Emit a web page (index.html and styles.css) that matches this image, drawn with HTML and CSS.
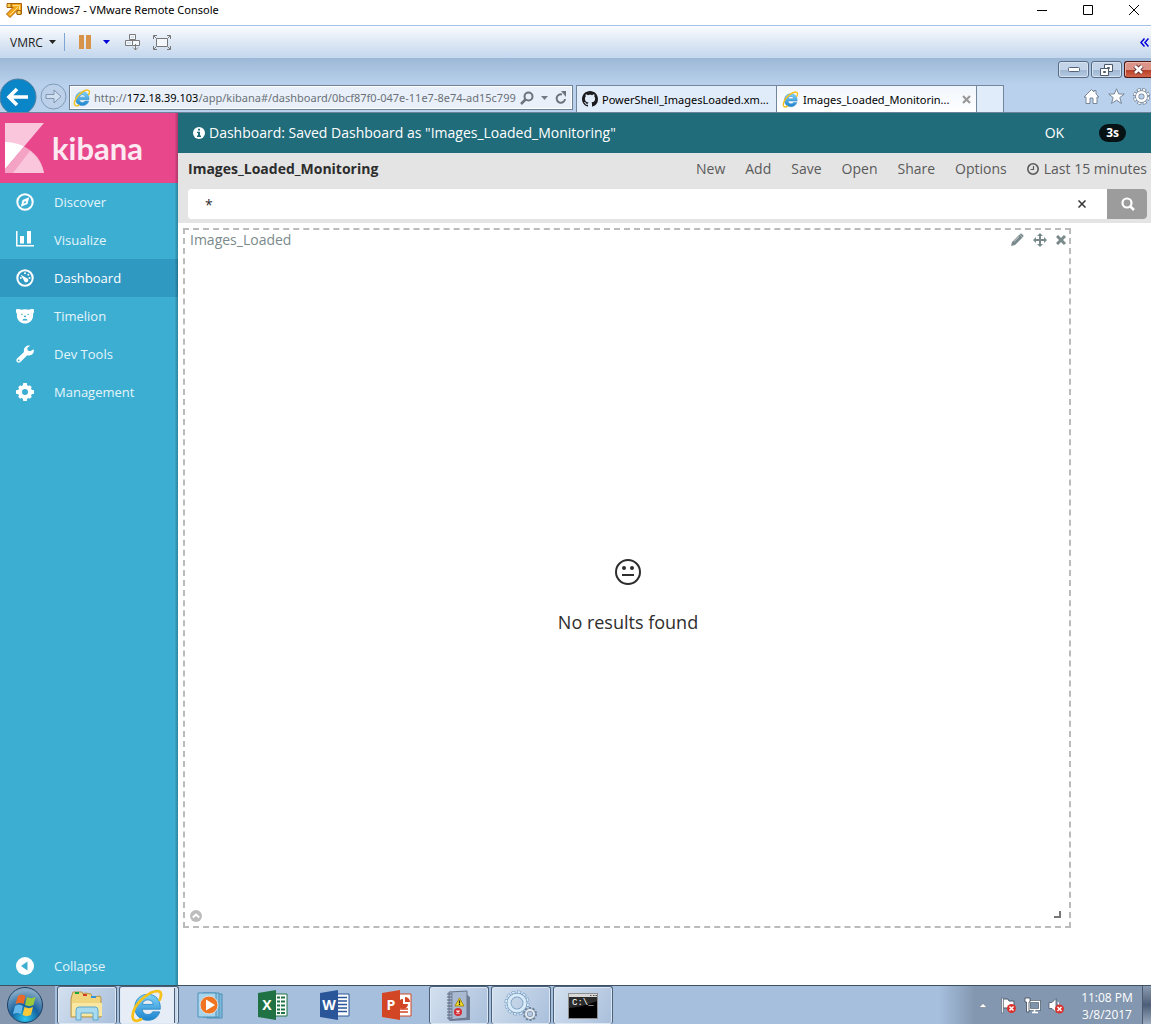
FILE: index.html
```html
<!DOCTYPE html>
<html lang="en">
<head>
    <meta charset="UTF-8">
    <meta name="viewport" content="width=device-width, initial-scale=1.0">
    <title>Windows7 - VMware Remote Console</title>
    <link rel="stylesheet" href="styles.css">
</head>
<body>
    <svg class="defs" aria-hidden="true">
        <defs>
            <linearGradient id="ieBlue" x1="0" y1="0" x2="0" y2="1">
                <stop offset="0" stop-color="#7fd4f8"/>
                <stop offset="1" stop-color="#1c83cf"/>
            </linearGradient>
            <symbol id="ie" viewBox="0 0 32 32">
                <path d="M28.500 19H11.500c.2 3 2.300 5 5.300 5 2.200 0 3.700-.9 4.500-2.500h6.700C26.500 26.500 22.300 29.500 16.800 29.500 9.500 29.500 4.500 24.500 4.500 17.300S9.700 5 16.800 5C24.300 5 29 10.500 28.500 19zM11.600 14.500h10.300c-.3-2.700-2.300-4.300-5.100-4.300s-4.700 1.600-5.200 4.300z" fill="url(#ieBlue)" stroke="#2a86c4" stroke-width=".8"/>
                <path d="M28 10c2-4.500 1.500-7.500-1.500-8C20 1 7 11 3.500 20.500 1.500 26 2.500 30 6 30c1.300 0 2.800-.5 4.500-1.500" fill="none" stroke="#f7c11c" stroke-width="2.600" stroke-linecap="round"/>
            </symbol>
        </defs>
    </svg>

    <header class="titlebar">
        <svg width="16" height="16" viewBox="0 0 16 16">
            <path d="M5 1.500h10.500V12H11V8.500L4 15.500.5 12 7 5.500H5z" fill="#f5a81c" stroke="#a8620c"/>
            <path d="M1 1.500h4v4H1zM11 8.500h4v4h-4z" fill="#fbd04e" stroke="#a8620c"/>
            <path d="M7 3.500h6.500V8M12 5l-8 8" fill="none" stroke="#fde08a"/>
        </svg>
        <h1>Windows7 - VMware Remote Console</h1>
        <div class="window-buttons">
            <button aria-label="Minimize"><svg width="12" height="12"><path d="M1 6.500h10" stroke="#000"/></svg></button>
            <button aria-label="Maximize"><svg width="12" height="12"><path d="M1.500 1.500h9v9h-9z" stroke="#000" fill="none"/></svg></button>
            <button aria-label="Close"><svg width="12" height="12"><path d="M1 1l10 10M11 1L1 11" stroke="#000"/></svg></button>
        </div>
    </header>

    <div class="toolbar">
        <button class="vmrc">VMRC <svg width="7" height="4"><path d="M0 0h7L3.500 4z" fill="#222"/></svg></button>
        <span class="divider"></span>
        <button class="pause" aria-label="Pause"><svg width="14" height="14"><path d="M1 0h5v14H1zM8 0h5v14H8z" fill="#d79448"/></svg></button>
        <button class="more" aria-label="Power options"><svg width="7" height="4"><path d="M0 0h7L3.500 4z" fill="#0000d8"/></svg></button>
        <button class="keys" aria-label="Send Ctrl+Alt+Del">
            <svg width="18" height="18" fill="#f4f8fc" stroke="#7a7a7a"><path d="M5.500 1.500h6v5h-6zM1.500 7.500h7v5h-7zM8.500 7.500h7v5h-7zM11.500 11v6M9 14.500l2.500 2.500 2.500-2.500"/><path d="M7 4h3M3 10h4" stroke="#b9cce2"/></svg>
        </button>
        <button aria-label="Full screen">
            <svg width="20" height="16" fill="none" stroke="#777"><path d="M4.500 4.500h11v8h-11z" fill="#f4f8fc"/><path d="M1.500 5V1.500H5M15 1.500h3.500V5M18.500 12v3.500H15M5 15.500H1.500V12M2 2l2 2M18 2l-2 2M18 15l-2-2M2 15l2-2"/></svg>
        </button>
        <button class="collapse-bar" aria-label="Hide toolbar"><svg width="9" height="9" fill="none" stroke="#0000d8" stroke-width="1.500"><path d="M4.500 0.500l-3.500 4 3.500 4M8.500.5L5 4.500l3.500 4"/></svg></button>
    </div>

    <div class="browser">
        <div class="caption">
            <button aria-label="Minimize browser"><svg width="12" height="6"><rect x=".5" y=".5" width="11" height="4" rx="1" fill="#fff" stroke="#556579"/></svg></button>
            <button aria-label="Restore browser"><svg width="13" height="12" fill="#fff" stroke="#4c5a6c"><path d="M4.500.5h8v7h-8zM7.500 3.500h2v1h-2z"/><path d="M.5 4.500h8v7h-8zM3.500 7.500h2v1h-2z"/></svg></button>
            <button class="close" aria-label="Close browser"><svg width="13" height="11"><path d="M3 2l7 7M10 2L3 9" stroke="#5c2c2c" stroke-width="4.500"/><path d="M3 2l7 7M10 2L3 9" stroke="#fff" stroke-width="2.600"/></svg></button>
        </div>
        <div class="navrow">
            <button class="back" aria-label="Back">
                <svg width="38" height="38" viewBox="0 0 38 38"><circle cx="18" cy="19" r="18" fill="#0a85c7" stroke="#4f7e9f"/><path d="M28 19H10M17 11l-8 8 8 8" fill="none" stroke="#fff" stroke-width="3.600"/></svg>
            </button>
            <button class="forward" aria-label="Forward">
                <svg width="27" height="27" viewBox="0 0 27 27"><circle cx="13.500" cy="13.500" r="12.500" fill="#bcd1e9" stroke="#7f9bb9"/><path d="M6 11.500h8V7l7 6.500-7 6.500v-4.500H6z" fill="#cfdff0" stroke="#7f95b0"/></svg>
            </button>
            <div class="address">
                <svg width="18" height="18"><use href="#ie"/></svg>
                <div class="url">http://<b>172.18.39.103</b>/app/kibana#/dashboard/0bcf87f0-047e-11e7-8e74-ad15c799</div>
                <button aria-label="Search"><svg width="14" height="14" fill="none" stroke="#6c737b" stroke-width="2"><circle cx="8.500" cy="5.500" r="4"/><path d="M5.500 8.500L1 13" stroke-width="2.500"/></svg></button>
                <button aria-label="Show history"><svg width="7" height="4"><path d="M0 0h7L3.500 4z" fill="#737a82"/></svg></button>
                <button aria-label="Refresh"><svg width="12" height="14" fill="none" stroke="#6c737b" stroke-width="2"><path d="M7 3.500A4.200 4.200 0 1 0 10 8"/><path d="M6 0l5 0v6z" fill="#6c737b" stroke="none"/></svg></button>
            </div>
            <div class="tabs">
                <a class="tab" href="#">
                    <svg width="16" height="16" viewBox="0 0 16 16"><path d="M8 0C3.580 0 0 3.580 0 8c0 3.540 2.290 6.530 5.470 7.590.4.070.55-.17.55-.38 0-.19-.01-.82-.01-1.490-2.010.37-2.530-.49-2.690-.94-.09-.23-.48-.94-.82-1.130-.28-.15-.68-.52-.01-.53.63-.01 1.080.58 1.230.82.72 1.210 1.870.87 2.330.66.07-.52.28-.87.51-1.070-1.780-.2-3.640-.89-3.640-3.950 0-.87.31-1.590.82-2.150-.08-.2-.36-1.020.08-2.120 0 0 .67-.21 2.200.82.64-.18 1.320-.27 2-.27s1.360.09 2 .27c1.530-1.040 2.200-.82 2.200-.82.44 1.100.16 1.920.08 2.120.51.56.82 1.270.82 2.150 0 3.070-1.870 3.750-3.650 3.950.29.25.54.73.54 1.480 0 1.070-.01 1.930-.01 2.200 0 .21.15.46.55.38A8 8 0 0 0 16 8c0-4.420-3.580-8-8-8z" fill="#1b1b1f"/></svg>
                    <span>PowerShell_ImagesLoaded.xm...</span>
                </a>
                <div class="tab current">
                    <svg width="17" height="17"><use href="#ie"/></svg>
                    <span>Images_Loaded_Monitorin...</span>
                    <button aria-label="Close tab"><svg width="9" height="9"><path d="M1 1l7 7M8 1L1 8" stroke="#999" stroke-width="2.200"/></svg></button>
                </div>
                <button class="new-tab" aria-label="New tab"></button>
            </div>
            <div class="tools">
                <button aria-label="Home"><svg width="17" height="17" viewBox="0 0 17 17"><path d="M8.500 1.500L1 9h2v6.500h4V10h3v5.500h4V9h2l-3-3V2.500h-2V4z" fill="#fff" stroke="#77869a"/></svg></button>
                <button aria-label="Favorites"><svg width="17" height="17" viewBox="0 0 17 17"><path d="M8.500.8l2.200 5.200h5.600l-4.500 3.600 1.700 5.900-5-3.400-5 3.400 1.700-5.900L.7 6h5.600z" fill="#fff" stroke="#77869a"/></svg></button>
                <button aria-label="Tools"><svg width="17" height="17" viewBox="0 0 17 17" fill="none"><circle cx="8.500" cy="8.500" r="6.500" stroke="#77869a" stroke-width="4" stroke-dasharray="3.600 1.500"/><circle cx="8.500" cy="8.500" r="6.500" stroke="#fff" stroke-width="2.800" stroke-dasharray="2.200 2.900" stroke-dashoffset="-.7"/><circle cx="8.500" cy="8.500" r="4.300" stroke="#77869a" stroke-width="4"/><circle cx="8.500" cy="8.500" r="4.300" stroke="#fff" stroke-width="2.600"/></svg></button>
            </div>
        </div>
    </div>

    <div class="kibana">
        <nav class="sidebar">
            <a class="logo" href="#">
                <svg width="40" height="50" viewBox="0 0 40 50">
                    <path d="M0 0h39L0 46z" fill="#f9c6dc"/>
                    <path d="M0 19c7 0 13 1.500 19 4.500L0 46z" fill="#fff"/>
                    <path d="M19 23.500C30 29 37 38 39 50H0v-4z" fill="#f5a3c5"/>
                    <path d="M25 28c7 5 12 13 14 22H8z" fill="#f9c6dc"/>
                </svg>
                <span>kibana</span>
            </a>
            <a class="item" href="#">
                <svg width="18" height="18" viewBox="0 0 18 18"><circle cx="9" cy="9" r="7.700" fill="none" stroke="#fff" stroke-width="2"/><path fill-rule="evenodd" d="M13.200 4.300L11.500 11 4.800 13.700 6.500 7zM9 7.800L7.300 10.800 10.300 9.500z" fill="#fff"/></svg>
                Discover
            </a>
            <a class="item" href="#">
                <svg width="18" height="18" viewBox="0 0 18 18"><path d="M0 0h1.500v14H18v1.500H0zM4 5h4v7.500H4zM11 0h4v12.500h-4z" fill="#fff"/></svg>
                Visualize
            </a>
            <a class="item active" href="#">
                <svg width="18" height="18" viewBox="0 0 18 18"><circle cx="9" cy="9" r="7.700" fill="none" stroke="#fff" stroke-width="2"/><path d="M4.500 5.500l6 3.500a2.200 2.200 0 1 1-2.500 2.500z" fill="#fff"/><circle cx="9" cy="4.300" r="1" fill="#fff"/><circle cx="12.300" cy="5.800" r="1" fill="#fff"/><circle cx="13.500" cy="9" r="1" fill="#fff"/><circle cx="4.800" cy="9" r="1" fill="#fff"/></svg>
                Dashboard
            </a>
            <a class="item" href="#">
                <svg width="18" height="18" viewBox="0 0 18 18"><path d="M0 2.500c2-.8 4-.5 5 .2 2-.7 6-.7 8 0 1-.7 3-1 5-.2.200 2-.2 3.500-1 4.500.500 3-.5 5.500-2.500 7.500C12.500 16 11 16.500 9 16.500s-3.500-.5-5.500-2C1.500 12.500.5 10 1 7 .2 6-.2 4.500 0 2.500z" fill="#fff"/><path d="M5 7.200l1.500.3M13 7.200l-1.500.3M8 9.200h2L9 10zM6.800 13C7.500 12 10.500 12 11.200 13z" fill="#3caed2" stroke="#3caed2"/></svg>
                Timelion
            </a>
            <a class="item" href="#">
                <svg width="18" height="18" viewBox="0 0 18 18"><path fill-rule="evenodd" d="M17.600 4.200c.9 2.600-.8 6-4.300 6.300-.8.100-1.500 0-2.100-.3L4.500 17c-1 1-2.400 1-3.400.1s-1-2.500 0-3.500l6.900-6.500C7.200 3 9.800.3 13.500.4l.8.200-3 2.300.4 2.600 2.500.8zM2.700 14.500a.9.900 0 1 0 0 1.800.9.900 0 0 0 0-1.800z" fill="#fff"/></svg>
                Dev Tools
            </a>
            <a class="item" href="#">
                <svg width="18" height="18" viewBox="0 0 18 18"><circle cx="9" cy="9" r="5" fill="none" stroke="#fff" stroke-width="4"/><path d="M7.200 0h3.600l.5 3H6.700zM7.200 18h3.600l.5-3H6.700zM0 7.200v3.600l3 .5V6.700zM18 7.200v3.600l-3 .5V6.700zM2.200 4.200l2-2 2.500 1.600-2.900 2.900zM15.800 4.200l-2-2-2.500 1.600 2.900 2.900zM2.200 13.800l2 2 2.500-1.600-2.900-2.900zM15.800 13.800l-2 2-2.500-1.600 2.900-2.900z" fill="#fff"/></svg>
                Management
            </a>
            <a class="item collapse" href="#">
                <svg width="18" height="18" viewBox="0 0 18 18"><circle cx="9" cy="9" r="9" fill="#fff"/><path d="M11.500 4.500v9L5 9z" fill="#3caed2"/></svg>
                Collapse
            </a>
        </nav>

        <main class="content">
            <div class="notice">
                <svg width="12" height="12" viewBox="0 0 12 12"><circle cx="6" cy="6" r="6" fill="#fff"/><path d="M5 1.800h2v1.700H5zM4 4.800h3v3.800h1V10H4V8.600h1V6H4z" fill="#216c7b"/></svg>
                <p>Dashboard: Saved Dashboard as "Images_Loaded_Monitoring"</p>
                <button>OK</button>
                <span class="badge">3s</span>
            </div>
            <div class="topnav">
                <div class="menu">
                    <h2>Images_Loaded_Monitoring</h2>
                    <a href="#">New</a>
                    <a href="#">Add</a>
                    <a href="#">Save</a>
                    <a href="#">Open</a>
                    <a href="#">Share</a>
                    <a href="#">Options</a>
                    <a href="#"><svg width="12" height="12" viewBox="0 0 12 12" fill="none" stroke="#5a5a5a"><circle cx="6" cy="6" r="5.200" stroke-width="1.600"/><path d="M6.500 3v3.500H3.500" stroke-width="1.200"/></svg> Last 15 minutes</a>
                </div>
                <form class="search">
                    <input type="text" value="*" aria-label="Query">
                    <button class="clear" type="button" aria-label="Clear"><svg width="8" height="8"><path d="M.5.500l7 7M7.500.5l-7 7" stroke="#333" stroke-width="1.500"/></svg></button>
                    <button class="go" type="button" aria-label="Search"><svg width="14" height="14" fill="none" stroke="#fff"><circle cx="6" cy="6" r="4.500" stroke-width="2.200"/><path d="M9.300 9.300L13 13" stroke-width="2.600"/></svg></button>
                </form>
            </div>
            <section class="panel">
                <div class="panel-head">
                    <h3>Images_Loaded</h3>
                    <button aria-label="Edit"><svg width="14" height="14" viewBox="0 0 14 14"><path d="M1 13l1-4 7.500-7.500 3 3L5 12zM10.300.8a1 1 0 0 1 1.400 0l1.500 1.500a1 1 0 0 1 0 1.400l-.5.500-3-3z" fill="#7a8a8c"/><path d="M4 8.500L9 3.700" stroke="#c7cfd0"/></svg></button>
                    <button aria-label="Move"><svg width="14" height="14" viewBox="0 0 14 14"><path d="M7 0l3 3H8v3h3V4l3 3-3 3V8H8v3h2l-3 3-3-3h2V8H3v2L0 7l3-3v2h3V3H4z" fill="#7a8a8c"/></svg></button>
                    <button aria-label="Remove"><svg width="10" height="10"><path d="M1 1l8 8M9 1L1 9" stroke="#7a8a8c" stroke-width="3"/></svg></button>
                </div>
                <div class="empty">
                    <svg width="26" height="26" viewBox="0 0 26 26"><circle cx="13" cy="13" r="12" fill="none" stroke="#2d2d2d" stroke-width="2"/><circle cx="9" cy="9" r="2" fill="#2d2d2d"/><circle cx="17" cy="9" r="2" fill="#2d2d2d"/><path d="M7 16h12" stroke="#2d2d2d" stroke-width="2"/></svg>
                    <p>No results found</p>
                </div>
                <div class="panel-foot">
                    <button aria-label="Show details"><svg width="12" height="12"><circle cx="6" cy="6" r="6" fill="#bdbdbd"/><path d="M2.800 7.500L6 4.500l3.200 3" fill="none" stroke="#fff" stroke-width="2"/></svg></button>
                    <svg class="grip" width="7" height="7"><path d="M6 0v6H0" fill="none" stroke="#777" stroke-width="2"/></svg>
                </div>
            </section>
        </main>
    </div>

    <footer class="taskbar">
        <button class="start" aria-label="Start">
            <svg width="38" height="38" viewBox="0 0 38 38">
                <defs><radialGradient id="orb" cx=".5" cy=".9" r=".8"><stop offset="0" stop-color="#2cc7f2"/><stop offset=".5" stop-color="#14629f"/><stop offset="1" stop-color="#83a7c4"/></radialGradient></defs>
                <circle cx="19" cy="19" r="17.500" fill="url(#orb)" stroke="#1c3f63"/>
                <path d="M12 10c3-2 5-1.500 7.500 0l-2 8c-2.500-1.500-5-1.500-8 0z" fill="#ea6a2a"/>
                <path d="M21 11c3 1.500 5.500 1.500 8.500 0l-2 8c-3 1.500-5.500 1.500-8.500 0z" fill="#9bc83c"/>
                <path d="M9 20c3-1.700 5.500-1.500 8 0l-2 8c-2.500-1.500-5-1.500-8 0z" fill="#66b7ea"/>
                <path d="M18.500 21c3 1.500 5.500 1.500 8.500 0l-2 8c-3 1.500-5.500 1.500-8.500 0z" fill="#fbc93a"/>
            </svg>
        </button>
        <button class="task open" aria-label="Windows Explorer">
            <svg width="34" height="32" viewBox="0 0 34 32"><path d="M2 5l1-3h9l1 2 2-1 6 1 1 3 8-1 1 2v19H1V9z" fill="#f0d57f" stroke="#b6934a"/><path d="M2 13h30v13H2z" fill="#f9e7a2"/><path d="M5 2h4v2H5z" fill="#1ca13b"/><path d="M13 4h4v2h-4z" fill="#d33c2a"/><path d="M21 6h5v2h-5z" fill="#3494d6"/><path d="M6 30V20q0-3 3-3h16q3 0 3 3v10h-5v-7H11v7z" fill="#a8daf0" stroke="#5ca7cb"/></svg>
        </button>
        <button class="task open current stack" aria-label="Internet Explorer">
            <svg width="34" height="34"><use href="#ie"/></svg>
        </button>
        <button class="task" aria-label="Windows Media Player">
            <svg width="30" height="28" viewBox="0 0 30 28"><path d="M11 3h15v24H11z" fill="#7fb9d9" stroke="#4b8fb7"/><path d="M7 2h16v24H7z" fill="#92c7e3" stroke="#4b8fb7"/><path d="M2 2h18v24H2z" fill="#a9d5ec" stroke="#4b8fb7"/><circle cx="13" cy="14" r="9" fill="#f17521" stroke="#d7dfe6"/><path d="M10 8.500v11l9-5.500z" fill="#fff"/></svg>
        </button>
        <button class="task" aria-label="Excel">
            <svg width="30" height="30" viewBox="0 0 30 30"><path d="M16 4h13v22H16z" fill="#fff" stroke="#207245"/><path d="M19 7.500h8M19 11.500h8M19 15.500h8M19 19.500h8M19 23h8" stroke="#207245" stroke-width="2"/><path d="M22.500 5v20" stroke="#fff"/><path d="M0 3l18-3v30L0 27z" fill="#207245"/><text class="office" x="9" y="20">X</text></svg>
        </button>
        <button class="task" aria-label="Word">
            <svg width="30" height="30" viewBox="0 0 30 30"><path d="M16 4h13v22H16z" fill="#fff" stroke="#2a5699"/><path d="M17 7.500h10M17 11h10M17 14.500h10M17 18h10M17 21.500h10" stroke="#2a5699" stroke-width="1.500"/><path d="M0 3l18-3v30L0 27z" fill="#2a5699"/><text class="office" x="9" y="20">W</text></svg>
        </button>
        <button class="task" aria-label="PowerPoint">
            <svg width="30" height="30" viewBox="0 0 30 30"><path d="M16 4h13v22H16z" fill="#fff" stroke="#d24625"/><path d="M17 19h9M17 22h9" stroke="#d24625" stroke-width="1.500"/><path d="M21 9v5h5a5 5 0 1 1-5-5z" fill="#d24625"/><path d="M23 7a5 5 0 0 1 5 5h-5z" fill="#d24625"/><path d="M0 3l18-3v30L0 27z" fill="#d24625"/><text class="office" x="9" y="20">P</text></svg>
        </button>
        <button class="task open" aria-label="Event Viewer">
            <svg width="26" height="32" viewBox="0 0 26 32"><path d="M20 4l4 3v23l-20 1-1-2z" fill="#6f7d95"/><path d="M3 2l18-1v27L3 30z" fill="#a9b9d2" stroke="#66758d"/><path d="M6 2v27" stroke="#7a89a3"/><path d="M1 4h5M1 7h5M1 10h5M1 13h5M1 16h5M1 19h5M1 22h5M1 25h5M1 28h5" stroke="#596579"/><path d="M13.500 8l4.500 8H9z" fill="#f9e12c" stroke="#a18a10"/><path d="M13.500 10.500v3M13.500 14v1" stroke="#222" stroke-width="1.300"/><circle cx="12" cy="22" r="4" fill="#d42e35"/><path d="M10.500 20.500l3 3M13.500 20.500l-3 3" stroke="#fff" stroke-width="1.300"/></svg>
        </button>
        <button class="task open" aria-label="Services">
            <svg width="34" height="32" viewBox="0 0 34 32" fill="none"><circle cx="13" cy="13" r="10.500" stroke="#6f97bd" stroke-width="4" stroke-dasharray="3.500 2"/><circle cx="13" cy="13" r="10.500" stroke="#d9ebf8" stroke-width="3" stroke-dasharray="2.500 3" stroke-dashoffset="-.5"/><circle cx="13" cy="13" r="8" stroke="#6f97bd" stroke-width="4.600"/><circle cx="13" cy="13" r="8" stroke="#d9ebf8" stroke-width="3.200"/><circle cx="26" cy="24" r="5.500" stroke="#6b8199" stroke-width="3" stroke-dasharray="2 1.450"/><circle cx="26" cy="24" r="4" stroke="#7d92a8" stroke-width="3.500"/><circle cx="26" cy="24" r="4" stroke="#e4ebf2" stroke-width="2"/></svg>
        </button>
        <button class="task open" aria-label="Command Prompt">
            <svg width="30" height="26" viewBox="0 0 30 26"><path d="M.5.5h29v25H.5z" fill="#000" stroke="#8f8f8f"/><path d="M1 1h28v3H1z" fill="#d8d8d8"/><path d="M22 2.500h1.500M25 2.500h1.500M27.500 2.500H29" stroke="#555"/><path d="M1 15q14-1 28-7V4H1z" fill="#2b2b2b"/><text class="prompt" x="4" y="12">C:\_</text></svg>
        </button>
        <div class="tray">
            <button aria-label="Show hidden icons"><svg width="8" height="5"><path d="M0 4.500L4 .5l4 4z" fill="#fff" stroke="#5d6b7e" stroke-width=".5"/></svg></button>
            <svg width="17" height="17" viewBox="0 0 17 17"><path d="M3 2h5l1 2h5v7H3z" fill="#fff" stroke="#4b596c"/><path d="M1.500 1h1.800v15H1.500z" fill="#fff" stroke="#4b596c" stroke-width=".6"/><circle cx="11.500" cy="11.500" r="4.500" fill="#d9322d"/><path d="M9.500 9.500l4 4M13.500 9.500l-4 4" stroke="#fff" stroke-width="1.500"/></svg>
            <svg width="17" height="17" viewBox="0 0 17 17"><path d="M5.500 4.500h10v8h-10z" fill="#7f93ab" stroke="#3d4959" stroke-width="2.600"/><path d="M5.500 4.500h10v8h-10z" stroke="#fff" stroke-width="1.400" fill="none"/><path d="M8 15.500h6M10.500 13v2" stroke="#fff" stroke-width="1.500"/><path d="M1 1h5v4H5v10H2.500V5H1z" fill="#fff" stroke="#3d4959" stroke-width=".8"/></svg>
            <svg width="17" height="17" viewBox="0 0 17 17"><path d="M1 5.500h3l4-4v14l-4-4H1z" fill="#fff" stroke="#4b596c" stroke-width=".8"/><path d="M10 5q1.500 3 0 6" stroke="#fff" fill="none"/><circle cx="11.500" cy="12" r="4.500" fill="#d9322d"/><path d="M9.500 10l4 4M13.500 10l-4 4" stroke="#fff" stroke-width="1.500"/></svg>
            <div class="clock">11:08 PM<br>3/8/2017</div>
        </div>
        <button class="show-desktop" aria-label="Show desktop"></button>
    </footer>
</body>
</html>
```

FILE: styles.css
```css
* {
    box-sizing: border-box;
}
body {
    margin: 0;
    min-height: 100vh;
    display: flex;
    flex-direction: column;
    font-family: "Open Sans", sans-serif;
    font-size: 14px;
    color: #2d2d2d;
    background: #fff;
}
h1, h2, h3, p {
    margin: 0;
}
button {
    display: flex;
    align-items: center;
    justify-content: center;
    padding: 0;
    border: none;
    background: none;
    font: inherit;
    color: inherit;
    cursor: pointer;
}
a {
    color: inherit;
    text-decoration: none;
}
svg {
    display: block;
    flex: none;
}
.defs {
    position: absolute;
    width: 0;
    height: 0;
}

/* console window */
.titlebar {
    display: flex;
    align-items: center;
    height: 26px;
    padding: 0 0 6px 6px;
    border-bottom: 1px solid #a3c3e6;
    color: #000;
}
.titlebar h1 {
    margin-left: 5px;
    font-family: "Noto Sans", sans-serif;
    font-size: 11px;
    font-weight: 400;
}
.window-buttons {
    display: flex;
    margin-left: auto;
}
.window-buttons button {
    width: 46px;
    padding-left: 12px;
}
.toolbar {
    display: flex;
    align-items: center;
    height: 32px;
    padding: 0 2px 0 10px;
    background: linear-gradient(#fafcff, #dbe6f3 55%, #c3d7ee);
    font-size: 12px;
    color: #222;
}
.vmrc svg {
    margin-left: 6px;
}
.divider {
    width: 1px;
    height: 18px;
    margin: 0 13px 0 8px;
    background: #7fa6d3;
}
.more {
    margin: 0 14px 0 11px;
}
.keys {
    margin-right: 10px;
}
.collapse-bar {
    margin-left: auto;
}

/* browser chrome */
.browser {
    height: 55px;
    border-bottom: 1px solid #6d8299;
    background: linear-gradient(#9db8d7, #b9d1ec 50%, #b9d1ec);
    font-family: "Noto Sans", sans-serif;
    font-size: 11px;
}
.caption {
    display: flex;
    justify-content: flex-end;
    gap: 2px;
    height: 20px;
    padding-top: 3px;
}
.caption button {
    width: 31px;
    height: 17px;
    border: 1px solid #596b83;
    border-radius: 3px;
    box-shadow: inset 0 0 0 1px #d5e2f1;
    background: linear-gradient(#c3d4e8 50%, #9fb6d1 50%, #b4cae3);
}
.caption .close {
    width: 27px;
    border-color: #4d1818;
    border-right: none;
    border-radius: 3px 0 0 3px;
    box-shadow: inset 1px 1px 0 #eab4a8;
    background: linear-gradient(#dc9488 50%, #b53a22 50%, #d0664d);
}
.navrow {
    display: flex;
    align-items: flex-end;
    height: 34px;
}
.back {
    align-items: flex-start;
    height: 34px;
    width: 40px;
    justify-content: flex-start;
    overflow: hidden;
}
.forward {
    margin: 0 3px 2px 0;
    width: 26px;
}
.address {
    flex: 1;
    min-width: 0;
    display: flex;
    align-items: center;
    gap: 7px;
    height: 25px;
    margin: 0 3px 2px 0;
    padding: 0 5px 0 3px;
    border: 1px solid #6e8297;
    box-shadow: inset 0 0 0 1px #fff;
    background: #e9f0f9;
    color: #6b7178;
}
.url {
    flex: 1;
    margin-right: -4px;
    margin-left: -4px;
    overflow: hidden;
    white-space: nowrap;
}
.url b {
    font-weight: 400;
    color: #000;
}
.tabs {
    display: flex;
    height: 27px;
    border: 1px solid #72869c;
    border-bottom: none;
    background: #e0ecf9;
    color: #000;
}
.tab {
    display: flex;
    align-items: center;
    gap: 4px;
    width: 200px;
    padding: 0 5px;
    border-right: 1px solid #72869c;
    white-space: nowrap;
}
.tab.current {
    background: linear-gradient(#f0f6fd, #fff);
}
.tab span {
    flex: 1;
}
.new-tab {
    width: 26px;
}
.tools {
    display: flex;
    justify-content: flex-end;
    gap: 8px;
    width: 147px;
    padding: 0 1px 7px 0;
}

/* kibana */
.kibana {
    flex: 1;
    display: flex;
}
.sidebar {
    position: relative;
    display: flex;
    flex-direction: column;
    width: 178px;
    background: #3caed2;
    color: #e4f5fa;
    font-size: 13px;
}
.sidebar::after {
    content: "";
    position: absolute;
    top: 0;
    right: 0;
    bottom: 0;
    width: 3px;
    background: linear-gradient(to right, rgba(0, 0, 0, 0.05), rgba(0, 0, 0, 0.25));
}
.logo {
    display: flex;
    align-items: center;
    gap: 7px;
    height: 70px;
    padding-left: 5px;
    background: #e8488b;
    color: #fde9f2;
    font-family: "Lato", sans-serif;
    font-size: 31px;
    font-weight: 700;
    line-height: 36px;
}
.item {
    display: flex;
    align-items: center;
    gap: 20px;
    height: 38px;
    padding-left: 16px;
}
.item.active {
    background: #3099c2;
    color: #fff;
}
.collapse {
    margin-top: auto;
}
.content {
    flex: 1;
    min-width: 0;
    display: flex;
    flex-direction: column;
}
.notice {
    display: flex;
    align-items: center;
    height: 40px;
    padding: 0 25px 0 15px;
    background: #216c7b;
    color: #fff;
    line-height: 18px;
}
.notice p {
    flex: 1;
    margin-left: 4px;
}
.badge {
    margin-left: 35px;
    padding: 0 7px;
    border-radius: 9px;
    background: #061214;
    font-size: 12px;
    font-weight: 700;
}
.topnav {
    padding: 0 4px 4px 10px;
    background: #e4e4e4;
}
.menu {
    display: flex;
    align-items: center;
    gap: 20px;
    height: 36px;
    padding-bottom: 4px;
    color: #5a5a5a;
    line-height: 18px;
}
.menu h2 {
    flex: 1;
    font-size: 14px;
    font-weight: 700;
    color: #2d2d2d;
}
.menu a {
    display: flex;
    align-items: center;
    gap: 5px;
}
.search {
    display: flex;
    height: 30px;
    border-radius: 4px;
    background: #fff;
    overflow: hidden;
}
.search input {
    flex: 1;
    min-width: 0;
    padding: 0 17px;
    border: none;
    font: inherit;
    color: #2d2d2d;
}
.clear {
    width: 50px;
}
.go {
    width: 40px;
    padding-left: 2px;
    background: #9c9c9c;
}
.panel {
    flex: 1;
    display: flex;
    flex-direction: column;
    margin: 5px 80px 57px 5px;
    padding: 0 3px 4px 5px;
    border: 2px dashed #bbb;
}
.panel-head {
    display: flex;
    align-items: center;
    gap: 9px;
    height: 20px;
    color: #7a8a8c;
    line-height: 18px;
}
.panel-head h3 {
    flex: 1;
    font-size: 14px;
    font-weight: 400;
}
.empty {
    flex: 1;
    display: flex;
    flex-direction: column;
    align-items: center;
    justify-content: center;
    gap: 24px;
    padding-top: 34px;
    font-size: 18px;
    line-height: 26px;
}
.panel-foot {
    display: flex;
    align-items: center;
    justify-content: space-between;
}
.grip {
    margin: 0 5px 4px 0;
}

/* taskbar */
.taskbar {
    display: flex;
    gap: 2px;
    height: 39px;
    border-top: 1px solid #3c5163;
    background: #a6bfdd;
}
.start {
    width: 55px;
    padding-right: 5px;
    background: #8597af;
}
.task {
    width: 60px;
    border-radius: 3px;
}
.task.open {
    border: 1px solid #4c6079;
    border-bottom: none;
    box-shadow: inset 0 0 0 1px #dbe7f4;
    background: linear-gradient(120deg, #d3e0ef, #a9bfdb);
}
.task.stack {
    padding-right: 5px;
    background: linear-gradient(to right, #e6edf7 54px, #4c6079 54px, #4c6079 55px, #c8d8ea 55px);
}
.office {
    font-family: "Open Sans", sans-serif;
    font-size: 14px;
    font-weight: 700;
    fill: #fff;
    text-anchor: middle;
}
.prompt {
    font-family: "Liberation Mono", monospace;
    font-size: 9px;
    fill: #fff;
}
.tray {
    display: flex;
    align-items: center;
    gap: 7px;
    margin-left: auto;
    margin-right: -2px;
    padding-left: 40px;
    background: linear-gradient(to right, #a6bfdd, #8397b0 36px);
    color: #fff;
}
.tray > button:first-child {
    margin-right: 6px;
}
.clock {
    width: 70px;
    font-size: 12px;
    line-height: 17px;
    text-align: center;
    padding-top: 2px;
}
.show-desktop {
    width: 9px;
    border-left: 1px solid #4c5a6d;
    background: linear-gradient(#8b9bb0, #4d5f78 50%, #9aabc0);
}
```
